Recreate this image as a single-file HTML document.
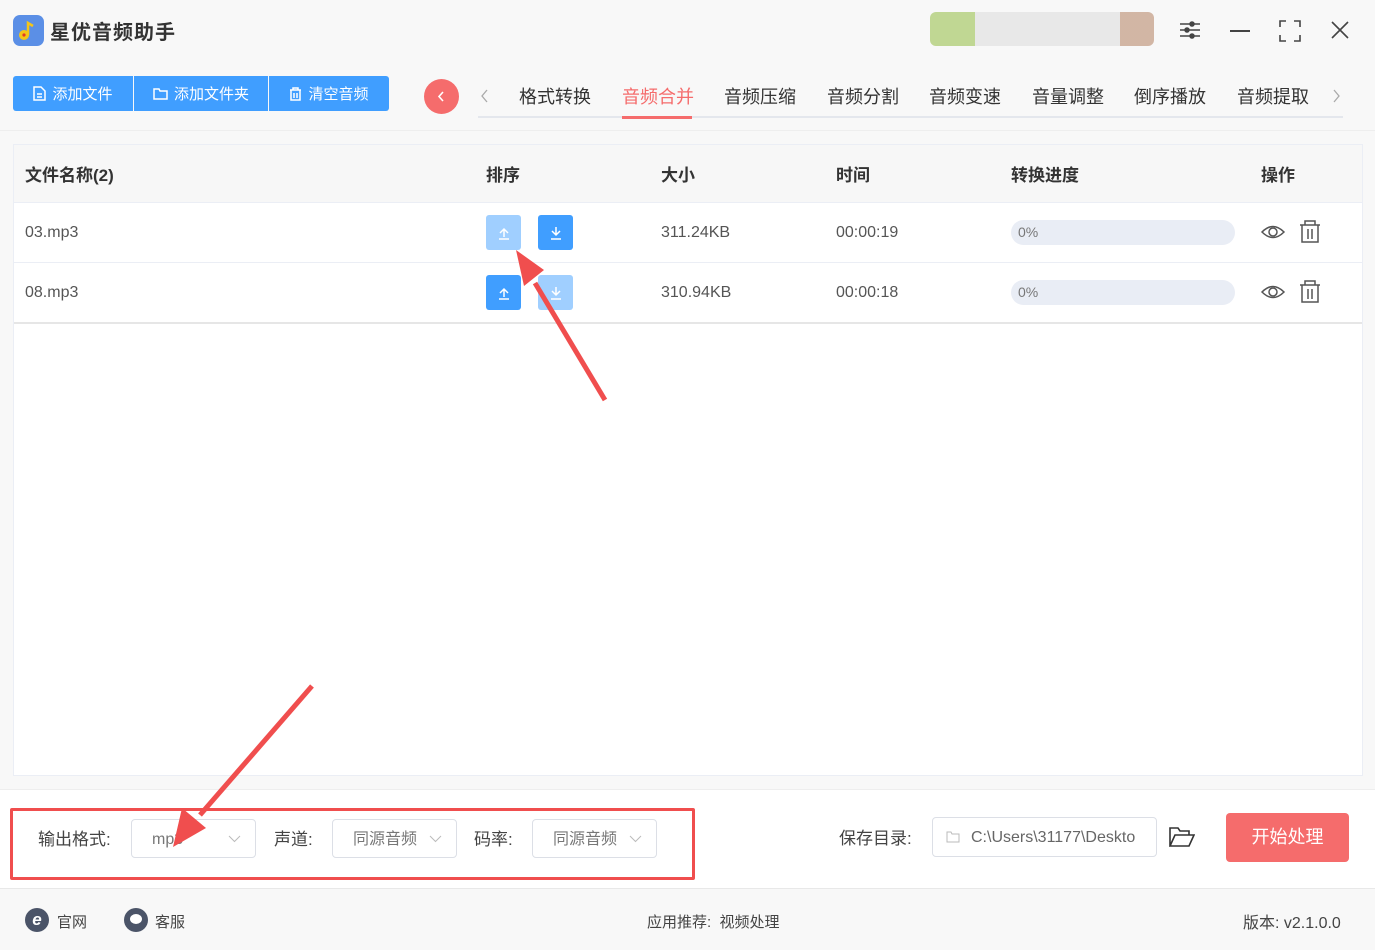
<!DOCTYPE html>
<html><head><meta charset="utf-8"><style>
*{margin:0;padding:0;box-sizing:border-box}
body{width:1375px;height:950px;background:#f8f8f8;font-family:"Liberation Sans","Noto Sans CJK SC",sans-serif;color:#333;position:relative;overflow:hidden}
.abs{position:absolute}
.tb{top:76px;height:35px;background:#409eff;color:#fff;font-size:15px;display:flex;align-items:center;justify-content:center;gap:6px}
.tab{top:83px;font-size:18px;color:#333}
.th{top:161px;font-size:17px;font-weight:bold;color:#333}
.cell{font-size:16px;color:#555}
.sb{width:35px;height:35px;border-radius:3px;display:flex;align-items:center;justify-content:center}
.prog{left:1011px;width:224px;height:25px;border-radius:13px;background:#e9edf5;font-size:14px;color:#777;padding-left:7px;line-height:25px}
.sel{top:819px;height:39px;border:1px solid #dcdfe6;border-radius:4px;background:#fff;font-size:16px;color:#777;line-height:40px;padding-left:20px}
.lab{top:825px;font-size:17px;color:#444}
</style></head><body>
<div class="abs" style="left:13px;top:15px;width:31px;height:31px;border-radius:7px;background:#5b8fe6">
<svg width="31" height="31"><circle cx="11" cy="20" r="5" fill="#f5c518"/><circle cx="11" cy="20" r="1.6" fill="#e03a2a"/><path d="M15 20V8l5 3" stroke="#f5c518" stroke-width="2.5" fill="none"/></svg></div>
<div class="abs" style="left:50px;top:16px;font-size:20px;font-weight:bold;color:#333;letter-spacing:1px">星优音频助手</div>
<div class="abs" style="left:930px;top:12px;width:224px;height:34px;background:linear-gradient(90deg,#9bc150 0 45px,#ddd 45px 190px,#b88a6d 190px 224px);opacity:.6;border-radius:6px"></div>
<svg class="abs" style="left:1178px;top:18px" width="24" height="24" stroke="#444" stroke-width="1.5" fill="none"><path d="M2 6h20M2 12h20M2 18h20"/><circle cx="14" cy="6" r="2" fill="#444"/><circle cx="9" cy="12" r="2" fill="#444"/><circle cx="14" cy="18" r="2" fill="#444"/></svg>
<div class="abs" style="left:1230px;top:30px;width:20px;height:1.5px;background:#444"></div>
<svg class="abs" style="left:1279px;top:20px" width="22" height="22" stroke="#444" stroke-width="1.6" fill="none"><path d="M1 7V1h6M15 1h6v6M21 15v6h-6M7 21H1v-6"/></svg>
<svg class="abs" style="left:1331px;top:21px" width="18" height="18" stroke="#444" stroke-width="1.6"><path d="M1 1l16 16M17 1L1 17"/></svg>
<div class="abs tb" style="left:13px;width:120px;border-radius:3px 0 0 3px"><svg width="13" height="15" stroke="#fff" stroke-width="1.5" fill="none"><path d="M1 1h7l4 4v9H1z M4 8h5M4 11h5"/></svg>添加文件</div>
<div class="abs tb" style="left:134px;width:134px"><svg width="15" height="13" stroke="#fff" stroke-width="1.5" fill="none"><path d="M1 2h5l1 2h7v8H1z"/></svg>添加文件夹</div>
<div class="abs tb" style="left:269px;width:120px;border-radius:0 3px 3px 0"><svg width="13" height="14" stroke="#fff" stroke-width="1.5" fill="none"><path d="M1 3h11M4 3V1h5v2M2 3v10h9V3M5 6v5M8 6v5"/></svg>清空音频</div>
<div class="abs" style="left:424px;top:79px;width:35px;height:35px;border-radius:50%;background:#f56c6c"><svg width="35" height="35" stroke="#fff" stroke-width="1.6" fill="none"><path d="M19 13l-4 4.5 4 4.5"/></svg></div>
<svg class="abs" style="left:480px;top:89px" width="10" height="14" stroke="#aaa" stroke-width="1.3" fill="none"><path d="M7 1L2 7l5 6"/></svg>
<svg class="abs" style="left:1331px;top:89px" width="10" height="14" stroke="#aaa" stroke-width="1.3" fill="none"><path d="M3 1l5 6-5 6"/></svg>
<div class="abs" style="left:478px;top:116px;width:865px;height:2px;background:#e4e7ed"></div>
<div class="abs tab" style="left:519px">格式转换</div>
<div class="abs tab" style="left:622px;color:#f56c6c">音频合并</div>
<div class="abs" style="left:622px;top:116px;width:70px;height:3px;background:#f56c6c"></div>
<div class="abs tab" style="left:724px">音频压缩</div>
<div class="abs tab" style="left:827px">音频分割</div>
<div class="abs tab" style="left:929px">音频变速</div>
<div class="abs tab" style="left:1032px">音量调整</div>
<div class="abs tab" style="left:1134px">倒序播放</div>
<div class="abs tab" style="left:1237px">音频提取</div>
<div class="abs" style="left:0;top:130px;width:1375px;height:1px;background:#eee"></div>
<div class="abs" style="left:13px;top:144px;width:1350px;height:632px;background:#fff;border:1px solid #ebeef5"></div>
<div class="abs" style="left:14px;top:145px;width:1348px;height:58px;background:#f7f7f7;border-bottom:1px solid #ebeef5"></div>
<div class="abs" style="left:14px;top:262px;width:1348px;height:1px;background:#ebeef5"></div>
<div class="abs" style="left:14px;top:322px;width:1348px;height:2px;background:#e6e6e6"></div>
<div class="abs th" style="left:25px">文件名称(2)</div>
<div class="abs th" style="left:486px">排序</div>
<div class="abs th" style="left:661px">大小</div>
<div class="abs th" style="left:836px">时间</div>
<div class="abs th" style="left:1011px">转换进度</div>
<div class="abs th" style="left:1261px">操作</div>
<div class="abs cell" style="left:25px;top:224px">03.mp3</div>
<div class="abs cell" style="left:25px;top:284px">08.mp3</div>
<div class="abs cell" style="left:661px;top:224px">311.24KB</div>
<div class="abs cell" style="left:661px;top:284px">310.94KB</div>
<div class="abs cell" style="left:836px;top:224px">00:00:19</div>
<div class="abs cell" style="left:836px;top:284px">00:00:18</div>
<div class="abs sb" style="left:486px;top:215px;background:#a0cfff"><svg width="14" height="14" stroke="#fff" stroke-width="1.5" fill="none"><path d="M7 11V3M3 7l4-4 4 4M2 13h10"/></svg></div>
<div class="abs sb" style="left:538px;top:215px;background:#409eff"><svg width="14" height="14" stroke="#fff" stroke-width="1.5" fill="none"><path d="M7 1v8M3 5l4 4 4-4M2 13h10"/></svg></div>
<div class="abs sb" style="left:486px;top:275px;background:#409eff"><svg width="14" height="14" stroke="#fff" stroke-width="1.5" fill="none"><path d="M7 11V3M3 7l4-4 4 4M2 13h10"/></svg></div>
<div class="abs sb" style="left:538px;top:275px;background:#a0cfff"><svg width="14" height="14" stroke="#fff" stroke-width="1.5" fill="none"><path d="M7 1v8M3 5l4 4 4-4M2 13h10"/></svg></div>
<div class="abs prog" style="top:220px">0%</div>
<div class="abs prog" style="top:280px">0%</div>
<svg class="abs" style="left:1260px;top:220px" width="60" height="84" stroke="#555" stroke-width="1.5" fill="none">
<path d="M2 12Q13 1 24 12Q13 23 2 12z"/><circle cx="13" cy="12" r="4"/>
<path d="M40 5h20M45 5V1h10v4M42 5v17h16V5M48 9v10M52 9v10"/>
<g transform="translate(0,60)"><path d="M2 12Q13 1 24 12Q13 23 2 12z"/><circle cx="13" cy="12" r="4"/>
<path d="M40 5h20M45 5V1h10v4M42 5v17h16V5M48 9v10M52 9v10"/></g></svg>
<div class="abs" style="left:0;top:789px;width:1375px;height:100px;background:#fff;border-top:1px solid #eee;border-bottom:1px solid #e8e8e8"></div>
<div class="abs lab" style="left:38px">输出格式:</div>
<div class="abs sel" style="left:131px;width:125px">mp3<svg style="position:absolute;right:14px;top:15px" width="13" height="8" stroke="#bbb" fill="none"><path d="M1 1l5.5 5.5L12 1"/></svg></div>
<div class="abs lab" style="left:274px">声道:</div>
<div class="abs sel" style="left:332px;width:125px">同源音频<svg style="position:absolute;right:14px;top:15px" width="13" height="8" stroke="#bbb" fill="none"><path d="M1 1l5.5 5.5L12 1"/></svg></div>
<div class="abs lab" style="left:474px">码率:</div>
<div class="abs sel" style="left:532px;width:125px">同源音频<svg style="position:absolute;right:14px;top:15px" width="13" height="8" stroke="#bbb" fill="none"><path d="M1 1l5.5 5.5L12 1"/></svg></div>
<div class="abs" style="left:10px;top:808px;width:685px;height:72px;border:3px solid #f04e4e;border-radius:2px"></div>
<div class="abs lab" style="left:839px;top:824px">保存目录:</div>
<div class="abs" style="left:932px;top:817px;width:225px;height:40px;border:1px solid #dcdfe6;border-radius:4px;background:#fff;font-size:16px;color:#666;line-height:40px;padding-left:38px">C:\Users\31177\Deskto</div>
<svg class="abs" style="left:946px;top:831px" width="14" height="12" stroke="#bbb" fill="none"><path d="M1 1h4l1 2h7v8H1z"/></svg>
<svg class="abs" style="left:1169px;top:826px" width="26" height="22" stroke="#333" stroke-width="1.6" fill="none"><path d="M1 20V2h8l2 3h9v4M1 20l5-11h19l-5 11z"/></svg>
<div class="abs" style="left:1226px;top:813px;width:123px;height:49px;background:#f56c6c;border-radius:4px;color:#fff;font-size:18px;text-align:center;line-height:49px">开始处理</div>
<div class="abs" style="left:25px;top:908px;width:24px;height:24px;border-radius:50%;background:#4b5468;color:#fff;font-weight:bold;text-align:center;line-height:23px;font-style:italic;font-size:17px">e</div>
<div class="abs" style="left:57px;top:911px;font-size:15px;color:#444">官网</div>
<div class="abs" style="left:124px;top:908px;width:24px;height:24px;border-radius:50%;background:#4b5468"><div style="margin:6px 0 0 6px;width:12px;height:10px;border-radius:50%;background:#fff"></div></div>
<div class="abs" style="left:155px;top:911px;font-size:15px;color:#444">客服</div>
<div class="abs" style="left:647px;top:911px;font-size:15px;color:#444">应用推荐:&nbsp; 视频处理</div>
<div class="abs" style="left:1243px;top:909px;font-size:16px;color:#444">版本:&nbsp;v2.1.0.0</div>
<svg class="abs" style="left:0;top:0" width="1375" height="950">
<path d="M605 400L535 283" stroke="#f04e4e" stroke-width="5"/><path d="M516 250L544 270L524 286z" fill="#f04e4e"/>
<path d="M312 686L200 815" stroke="#f04e4e" stroke-width="5"/><path d="M173 847L182 808L206 828z" fill="#f04e4e"/>
</svg>
</body></html>
